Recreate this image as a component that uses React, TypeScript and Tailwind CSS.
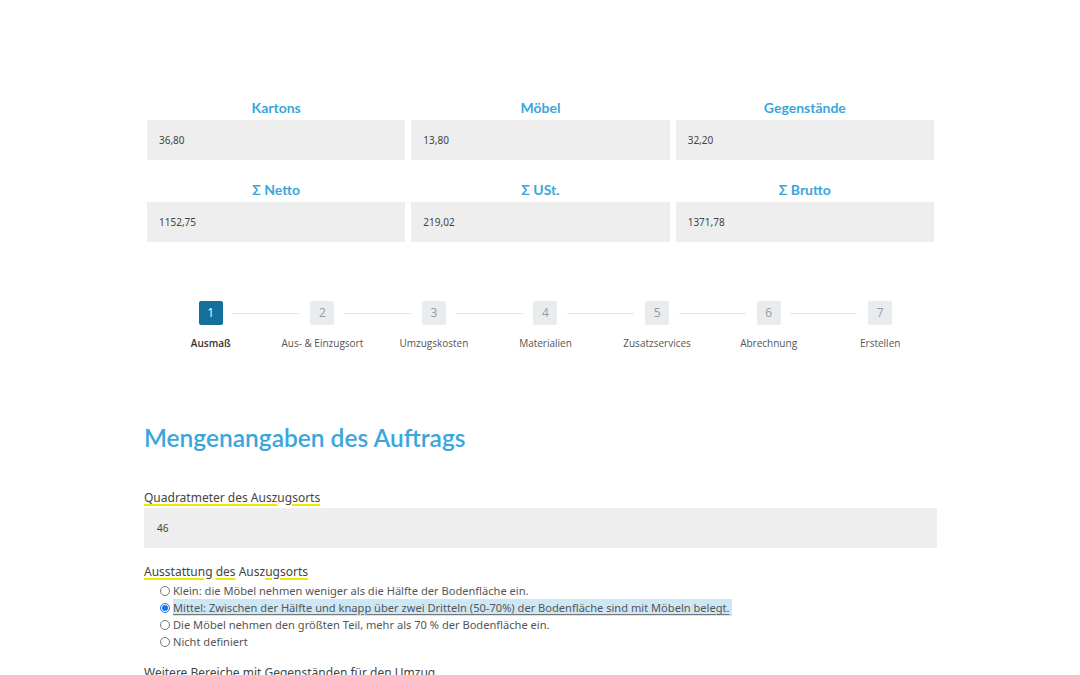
import React from "react";

const sums = [
  { label: "Kartons", value: "36,80" },
  { label: "Möbel", value: "13,80" },
  { label: "Gegenstände", value: "32,20" },
  { label: "Σ Netto", value: "1152,75" },
  { label: "Σ USt.", value: "219,02" },
  { label: "Σ Brutto", value: "1371,78" },
];

const steps = [
  "Ausmaß",
  "Aus- & Einzugsort",
  "Umzugskosten",
  "Materialien",
  "Zusatzservices",
  "Abrechnung",
  "Erstellen",
];

const options = [
  "Klein: die Möbel nehmen weniger als die Hälfte der Bodenfläche ein.",
  "Mittel: Zwischen der Hälfte und knapp über zwei Dritteln (50-70%) der Bodenfläche sind mit Möbeln belegt.",
  "Die Möbel nehmen den größten Teil, mehr als 70 % der Bodenfläche ein.",
  "Nicht definiert",
];

const Radio = ({ checked }: { checked: boolean }) => (
  <span
    className={`inline-flex w-[10px] h-[10px] rounded-full border items-center justify-center bg-white mr-[3px] shrink-0 ${
      checked ? "border-[#1a73e8]" : "border-[#777]"
    }`}
  >
    {checked && <span className="w-[6px] h-[6px] rounded-full bg-[#1a73e8]" />}
  </span>
);

export default function App() {
  return (
    <div className="w-[1080px] h-[675px] overflow-hidden bg-white font-['Noto_Sans',sans-serif]">
      <div className="w-[793px] ml-[144px] pt-[99px]">
        {/* summary grid */}
        <div className="grid grid-cols-3 gap-x-[6px] gap-y-[21px] px-[3px]">
          {sums.map((s) => (
            <div key={s.label} className="flex flex-col">
              <div className="text-center text-[14px] leading-[18px] font-bold font-['Lato',sans-serif] text-[#3aa6dc] mb-[3px]">
                {s.label}
              </div>
              <div className="h-[40px] bg-[#eeeeee] flex items-center pl-[12px] text-[10px] text-[#444]">
                {s.value}
              </div>
            </div>
          ))}
        </div>

        {/* stepper */}
        <div className="grid grid-cols-7 w-[781px] ml-[11px] mt-[59px] font-['Open_Sans',sans-serif]">
          {steps.map((label, i) => (
            <div key={label} className="flex flex-col items-center relative">
              {i > 0 && (
                <div className="absolute top-[12px] right-[calc(50%+23px)] w-[67px] h-px bg-[#e3e6ea]" />
              )}
              <div
                className={`w-[24px] h-[24px] rounded-[2px] flex items-center justify-center text-[12px] ${
                  i === 0 ? "bg-[#156f9b] text-white" : "bg-[#e9ecef] text-[#999]"
                }`}
              >
                {i + 1}
              </div>
              <div
                className={`mt-[11px] text-[10px] leading-[14px] ${
                  i === 0 ? "text-[#333] font-semibold" : "text-[#555]"
                }`}
              >
                {label}
              </div>
            </div>
          ))}
        </div>

        {/* form */}
        <h1 className="mt-[72px] text-[24.5px] leading-[32px] font-semibold font-['Lato',sans-serif] text-[#3aa6dc]">
          Mengenangaben des Auftrags
        </h1>

        <div className="mt-[36px] text-[12px] leading-[16px] text-[#444]">
          <span className="underline decoration-[#f2e600] decoration-2 underline-offset-2">
            Quadratmeter des Ausz
          </span>
          u
          <span className="underline decoration-[#f2e600] decoration-2 underline-offset-2">
            gsorts
          </span>
        </div>
        <div className="mt-[2px] h-[40px] bg-[#eeeeee] flex items-center pl-[13px] text-[10px] text-[#444]">
          46
        </div>

        <div className="mt-[16px] text-[12px] leading-[16px] text-[#444]">
          <span className="underline decoration-[#f2e600] decoration-2 underline-offset-2">
            Ausstattung
          </span>{" "}
          <span className="underline decoration-[#f2e600] decoration-2 underline-offset-2">
            des
          </span>{" "}
          Ausz
          <span className="underline decoration-[#f2e600] decoration-2 underline-offset-2">
            ugsorts
          </span>
        </div>
        <div className="flex flex-col pl-[16px] mt-[2px] text-[11.1px] leading-[17px] text-[#555]">
          {options.map((o, i) => (
            <div key={o} className="flex items-center">
              <Radio checked={i === 1} />
              <span
                className={
                  i === 1
                    ? "bg-[#cde7f5] underline decoration-[#777] underline-offset-2 pr-[2px]"
                    : ""
                }
              >
                {o}
              </span>
            </div>
          ))}
        </div>

        <div className="mt-[15px] text-[12px] leading-[16px] text-[#444]">
          Weitere Bereiche mit Gegenständen für den Umzug
        </div>
      </div>
    </div>
  );
}
